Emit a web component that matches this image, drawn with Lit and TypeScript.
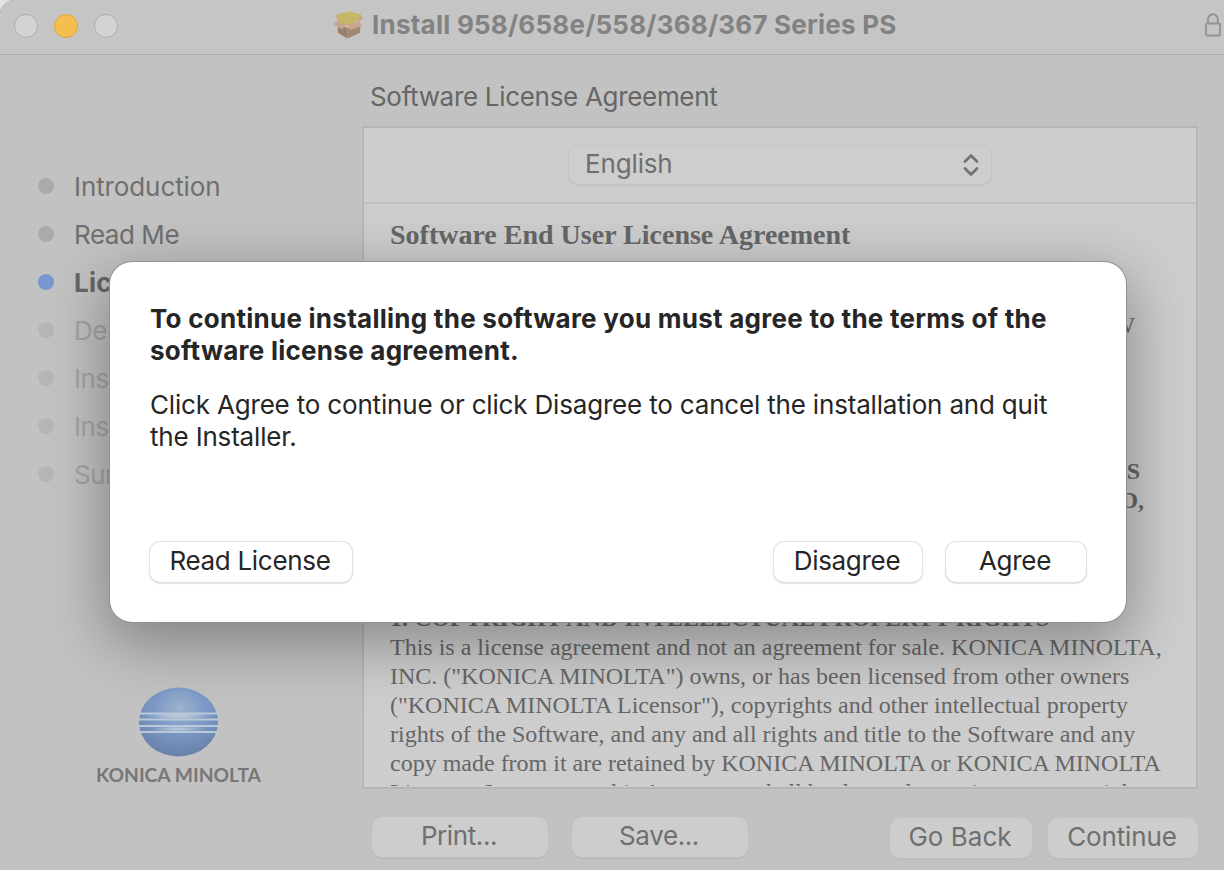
import { LitElement, html, css, svg } from "lit";
import { customElement } from "lit/decorators.js";

const steps = [
  ["Introduction", "done"],
  ["Read Me", "done"],
  ["License", "current"],
  ["Destination Select", "todo"],
  ["Installation Type", "todo"],
  ["Installation", "todo"],
  ["Summary", "todo"],
];

@customElement("app-root")
export class AppRoot extends LitElement {
  static styles = css`
    :host { display: block; width: 1224px; height: 870px; overflow: hidden; position: relative;
      font-family: Inter, "Liberation Sans", sans-serif; font-size: 26px; color: #6f6f6f; background: #c2c2c2; }
    * { box-sizing: border-box; }
    .window { width: 1224px; height: 870px; display: flex; flex-direction: column;
      background: radial-gradient(circle at 16px 16px, #c5c5c5 15px, #999 16px, #e2e2e2 17px) 0 0 / 16px 16px no-repeat, #c2c2c2; }
    .titlebar { height: 55px; flex: none; display: flex; align-items: center; background: #c5c5c5;
      border-top-left-radius: 15px; border-bottom: 1px solid #adadad; padding: 0 2px 2px 14px; justify-content: space-between; }
    .lights { display: flex; gap: 16px; width: 190px; }
    .light { width: 24px; height: 24px; border-radius: 50%; background: #d3d3d3; border: 1px solid #adadad; }
    .amber { background: #f5bf4f; border-color: #dba640; }
    .title { display: flex; align-items: center; gap: 8px; font-weight: 700; color: #828282; white-space: nowrap; line-height: 32px; padding: 0 5px 2px 0; }
    .title-text { width: 526px; letter-spacing: 0.23px; }
    .lock-slot { width: 190px; display: flex; justify-content: flex-end; padding: 0 1px 2px 0; }
    svg { display: block; flex: none; }
    .content { flex: 1; display: flex; min-height: 0; }
    .side { width: 362px; flex: none; padding: 107px 0 0 38px; display: flex; flex-direction: column; }
    .step { height: 48px; display: flex; align-items: center; gap: 20px; white-space: nowrap; letter-spacing: -.1px; }
    .step:nth-child(2) { letter-spacing: -.45px; }
    .dot { width: 16px; height: 16px; border-radius: 50%; background: #aaaaaa; }
    .todo { color: #a4a4a4; letter-spacing: -.5px; }
    .todo .dot { background: #b6b6b6; }
    .current { font-weight: 700; color: #666; letter-spacing: .2px; }
    .current .dot { background: #7896cf; }
    .logo { margin: 189px 0 0 56px; }
    .main { width: 836px; flex: none; display: flex; flex-direction: column; }
    .heading { height: 71px; padding: 26px 0 0 8px; line-height: 32px; color: #666; white-space: nowrap; letter-spacing: -.31px; }
    .panel { height: 663px; border: 2px solid #b6b6b6; background: #cdcdcd; display: flex; flex-direction: column; }
    .language { height: 76px; border-bottom: 2px solid #c1c1c1; display: flex; justify-content: center; padding-top: 18px; flex: none; }
    .select { width: 422px; height: 38px; border-radius: 10px; background: #cecece; box-shadow: 0 0 0 1px #c5c5c5, 0 1px 2px #acacac;
      display: flex; align-items: center; justify-content: space-between; padding: 0 11px 0 16px; letter-spacing: -.15px; }
    .select span { padding-bottom: 3px; }
    .doc { flex: 1; overflow: hidden; font-family: "Liberation Serif", serif; font-size: 24px; color: #666; padding: 14px 0 0 26px; margin-bottom: 1px; }
    .doc-title { font-size: 28px; font-weight: 700; line-height: 34px; height: 93px; white-space: nowrap; }
    .line { height: 29px; line-height: 29px; white-space: pre; }
    .tail { width: 745px; text-align: right; }
    .t2 { width: 750px; margin-top: 117px; }
    .t3 { width: 754px; margin-bottom: 89px; }
    .bold { font-weight: 700; }
    .footer { display: flex; padding: 28px 0 0 10px; }
    .btn { height: 40px; border-radius: 10px; background: #cdcdcd; box-shadow: 0 0 0 1px #bfbfbf, 0 1px 2px #a8a8a8;
      display: flex; align-items: center; justify-content: center; padding: 0 2px 3px 0; white-space: nowrap; flex: none; letter-spacing: -.3px; }
    .print { width: 176px; letter-spacing: -.4px; }
    .save { width: 176px; margin-left: 24px; letter-spacing: -.4px; }
    .back { width: 142px; margin: 1px 0 0 142px; letter-spacing: 0; }
    .continue { width: 150px; margin: 1px 0 0 16px; letter-spacing: -.15px; }
    .dialog { position: absolute; left: 110px; top: 262px; width: 1016px; height: 360px; border-radius: 22px; background: #fff; color: #262626;
      box-shadow: 0 0 0 1px #929292, 0 18px 60px 4px rgba(0,0,0,.33); padding: 41px 40px 0; display: flex; flex-direction: column; }
    .msg { font-weight: 700; line-height: 32px; white-space: pre; letter-spacing: .26px; }
    .info { line-height: 32px; margin-top: 22px; white-space: pre; letter-spacing: -.18px; }
    .actions { display: flex; margin-top: 89px; }
    .dialog .btn { background: #fff; box-shadow: 0 0 0 1px #e2e2e2, 0 1px 2px #999; }
    .read { width: 202px; }
    .disagree { width: 148px; margin-left: 422px; }
    .agree { width: 140px; margin-left: 24px; }
  `;

  box() {
    return svg`<svg width="31" height="30" viewBox="0 0 32 30">
      <path d="M5 14 L15 18 L15 29 L5 23Z" fill="#96806c"/><path d="M15 29 L28 23 L28 13 L15 18Z" fill="#a08772"/>
      <path d="M3 6 L5 4 L7 12Z M27 3 L31 8 L26 13Z" fill="#c3a38e"/>
      <path d="M5 4 L17 1 L29 4 L25 11 L15 15.5 L5 11Z" fill="#c5b765"/>
      <path d="M8 8 L17 4.500 L25 7.500 L15 12Z" fill="#cbbd6c"/>
      <path d="M11 8.500 L17 6 L22 8 L15.500 11Z M13 7.600 L19 9.500" stroke="#b9a85b" stroke-width=".8" fill="none"/>
      <path d="M4.500 10.500 L15 15 L9 19.500 L0 14Z M15 15 L26.500 11.500 L30 16 L18 20.500Z" fill="#c4a590"/>
    </svg>`;
  }

  render() {
    return html`
      <div class="window">
        <div class="titlebar">
          <div class="lights"><div class="light"></div><div class="light amber"></div><div class="light"></div></div>
          <div class="title">${this.box()}<span class="title-text">Install 958/658e/558/368/367 Series PS</span></div>
          <div class="lock-slot"><svg width="16" height="24" viewBox="0 0 17 24" preserveAspectRatio="none" fill="none" stroke="#929292" stroke-width="2"><rect x="1" y="10.5" width="15" height="12" rx="1.5"/><path d="M3.2 10V6.5a5.2 5.2 0 0 1 10.4 0V10"/></svg></div>
        </div>
        <div class="content">
          <div class="side">
            ${steps.map(([name, state]) => html`<div class="step ${state}"><span class="dot"></span><span>${name}</span></div>`)}
            <svg class="logo" width="170" height="102" viewBox="0 0 170 102">
              <defs><radialGradient id="g" cx=".52" cy=".3" r=".7"><stop offset="0" stop-color="#a0b3cd"/><stop offset=".45" stop-color="#7d9ac8"/><stop offset="1" stop-color="#6881aa"/></radialGradient>
              <radialGradient id="h"><stop offset="0" stop-color="#c3cfda"/><stop offset="1" stop-color="#c3cfda" stop-opacity="0"/></radialGradient></defs>
              <ellipse cx="84.500" cy="35" rx="39.500" ry="34.500" fill="url(#g)"/>
              <path d="M46 26.500H123M45 32.500H124M45 39H124M46 45H123" stroke="#bac9d8" stroke-width="1.8"/>
              <ellipse cx="84" cy="29" rx="34" ry="3.500" fill="url(#h)"/><ellipse cx="84" cy="42" rx="28" ry="3" fill="url(#h)"/>
              <text x="2" y="95" textLength="165" lengthAdjust="spacingAndGlyphs" font-family="Lato, sans-serif" font-weight="700" font-size="19" fill="#777">KONICA MINOLTA</text>
            </svg>
          </div>
          <div class="main">
            <div class="heading">Software License Agreement</div>
            <div class="panel">
              <div class="language"><div class="select"><span>English</span>
                <svg width="18" height="24" viewBox="0 0 18 24" fill="none" stroke="#747474" stroke-width="2.8" stroke-linecap="round" stroke-linejoin="round"><path d="M3 8.5 9 2.5 15 8.5M3 15.5 9 21.5 15 15.5"/></svg></div></div>
              <div class="doc">
                <div class="doc-title">Software End User License Agreement</div>
                <div class="line tail">W</div>
                <div class="line tail t2 bold">S</div>
                <div class="line tail t3 bold">D,</div>
                <div class="line bold">1. COPYRIGHT AND INTELLECTUAL PROPERTY RIGHTS</div>
                <div class="line">This is a license agreement and not an agreement for sale. KONICA MINOLTA,</div>
                <div class="line">INC. ("KONICA MINOLTA") owns, or has been licensed from other owners</div>
                <div class="line">("KONICA MINOLTA Licensor"), copyrights and other intellectual property</div>
                <div class="line">rights of the Software, and any and all rights and title to the Software and any</div>
                <div class="line">copy made from it are retained by KONICA MINOLTA or KONICA MINOLTA</div>
                <div class="line">Licensor. In no event, this Agreement shall be deemed to assign any copyright</div>
              </div>
            </div>
            <div class="footer"><div class="btn print">Print...</div><div class="btn save">Save...</div><div class="btn back">Go Back</div><div class="btn continue">Continue</div></div>
          </div>
        </div>
      </div>
      <div class="dialog">
        <div class="msg">To continue installing the software you must agree to the terms of the
software license agreement.</div>
        <div class="info">Click Agree to continue or click Disagree to cancel the installation and quit
the Installer.</div>
        <div class="actions"><div class="btn read">Read License</div><div class="btn disagree">Disagree</div><div class="btn agree">Agree</div></div>
      </div>`;
  }
}
